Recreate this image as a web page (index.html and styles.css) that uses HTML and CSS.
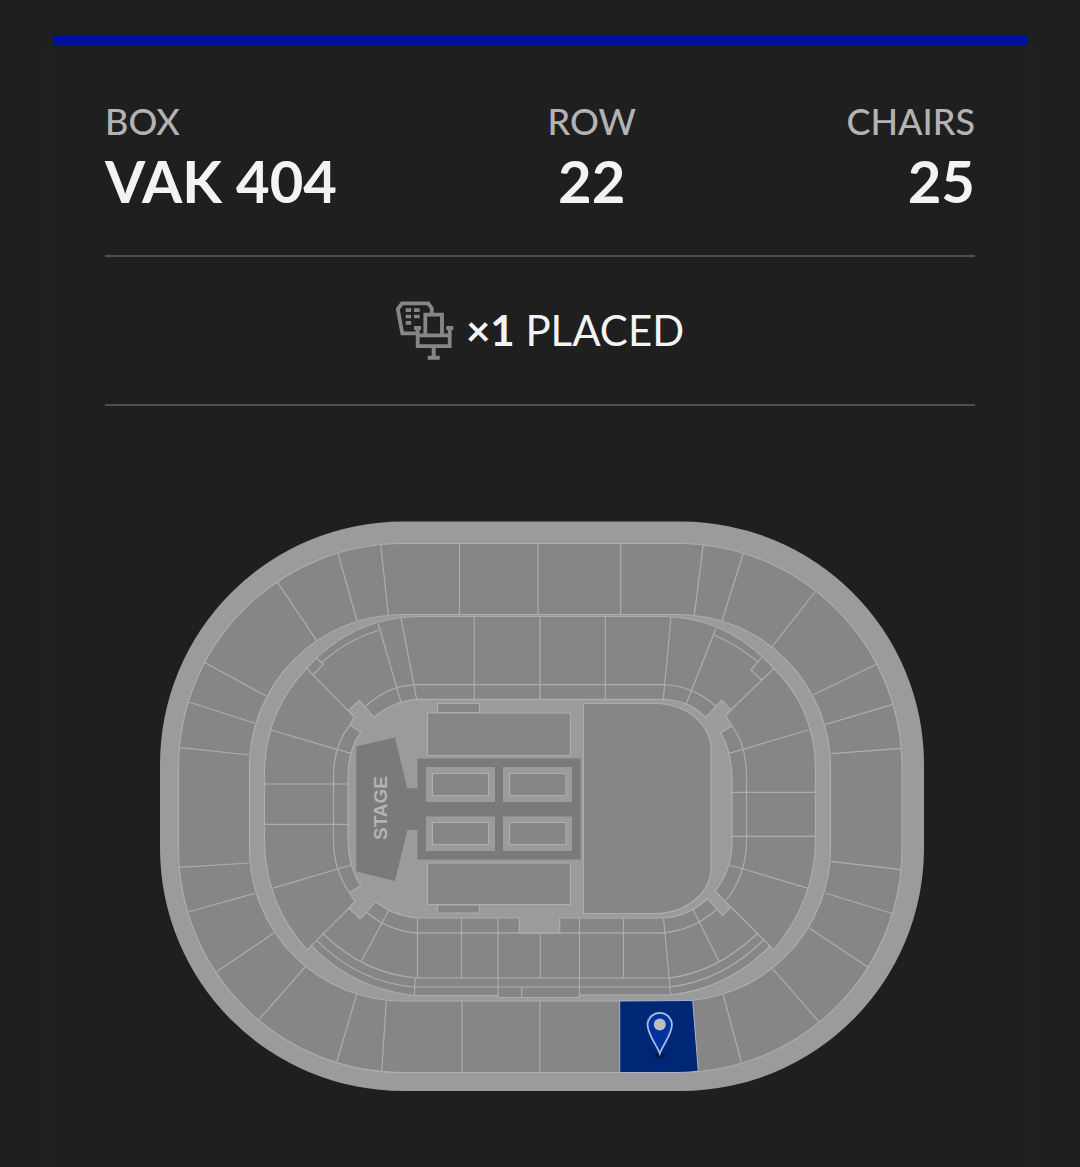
FILE: index.html
```html
<!DOCTYPE html>
<html lang="en">
<head>
    <meta charset="UTF-8">
    <meta name="viewport" content="width=device-width, initial-scale=1.0">
    <title>Your seat</title>
    <link rel="stylesheet" href="styles.css">
</head>
<body>
    <main class="ticket">
        <dl class="seat-info">
            <div class="seat-item">
                <dt>BOX</dt>
                <dd>VAK 404</dd>
            </div>
            <div class="seat-item center">
                <dt>ROW</dt>
                <dd>22</dd>
            </div>
            <div class="seat-item right">
                <dt>CHAIRS</dt>
                <dd>25</dd>
            </div>
        </dl>

        <div class="placed">
            <svg class="chair-icon" viewBox="0 0 58 59" aria-hidden="true">
                <path class="chair-line" d="M20 32.3H6.3L1.8 8 6 2.3H32.3L35.8 7.3V13M29.3 34V13.7H46V34M21.7 34.3H53.7V45.2H21.7ZM21.7 34V27M53.7 34V27"/>
                <path class="chair-fill" d="M18 25H25V29H18ZM50.3 25H57.3V29H50.3ZM35.7 46H39.7V55H35.7ZM31.7 54.7H43.7V58.7H31.7ZM9.7 7.3H15.2V11H9.7ZM18 7.3H23.7V11H18ZM9.7 13.7H15.2V17.3H9.7ZM18 13.7H23.7V17.3H18ZM9.7 20H15.2V23.7H9.7Z"/>
            </svg>
            <p><strong>×1</strong> PLACED</p>
        </div>

        <svg class="arena" viewBox="105 521 870 570" role="img" aria-label="Arena map">
            <!-- building -->
            <path class="base" d="M403 521.5H681A243 243 0 0 1 924 764.5V848A243 243 0 0 1 681 1091H403A243 243 0 0 1 160 848V764.5A243 243 0 0 1 403 521.5Z"/>

            <!-- upper ring -->
            <path class="seats" fill-rule="evenodd" d="M403 543.5H678A224 224 0 0 1 902 767.5V848.5A224 224 0 0 1 678 1072.5H403A224 224 0 0 1 178.5 848.5V767.5A224 224 0 0 1 403 543.5ZM402.5 614.5A153 153 0 0 0 249.5 767.5V848A153 153 0 0 0 402.5 1001H677.5A153 153 0 0 0 830.5 848V767.5A153 153 0 0 0 677.5 614.5Z"/>
            <path class="line" d="M380.7 544.3L388.3 614.7M338 553.3L357 621M277.7 582.3L316.7 640.7M204.3 662.3L266 696M188 701.7L255 723.3M178.7 747.3L249.7 755M459.5 543.5V614.5M538 543.5V614.5M620.7 543.5V614.5M703.3 544.3L694.3 615.3M743.3 553.3L722 620.7M815.7 591L772 646.7M877 664L813.3 694.7M893 704.3L825.7 724.3M901.7 748.3L830.7 753.7"/>
            <path class="line" d="M179.3 867.3L249.3 863M188 912L255 893.3M216.7 971.7L274.3 932.7M259.3 1019.3L305 967M336.7 1062L356.7 994.3M381.7 1071L386.3 1000.3M462 1001V1072.5M539.8 1001V1072.5M901 869.7L830.7 861.3M893 913.7L825.7 893.3M867.7 967L809 928M818.7 1021.3L772.3 968.3M741.3 1062L723.3 995"/>

            <!-- lower ring -->
            <path class="seats" fill-rule="evenodd" d="M415.5 616.5H664.5Q728 618 773.7 668.3Q815.5 709 815.5 770V843Q814 902 773.7 950L770 946Q729 988 670.7 995H579.5V997.5H498V995.5H414.3Q353 989 311.3 945.7L307.3 950Q266 905 264.5 843V770Q266 711 306.7 668.3Q350 619 415.5 616.5ZM417 699.3Q393 701 374 717.3L359.3 700.3L349 710L354 716.7L350 725L360.7 732.3Q348 750 348 777V842Q349 868 360.7 886L349.3 892.7L354.7 901.3L349 908L360 919L366.7 912.3L375.3 901.3Q393 916 417 918H519.3V933H559.7V918H663.5Q689 916 707.7 898.7L722.7 915.7L731 907.3L715 891Q732 870 732 842V777Q731 750 720.7 732.7L732 726L725.7 716L731 710L721.7 700.3L705.7 717.3Q689 700 663.3 699.3Z"/>
            <path class="line" d="M378.3 624L401 702.3M400.7 616.7L416.7 699.3M474.3 616.5V699.3M540 616.5V699.3M605.3 616.5V699.3M671 616.7L663.3 699.3M715.7 629L685.7 705M773.7 668.5L726.7 714M808.3 730L729.3 753.3M306.7 668.3L354 716.7M271 730L350.7 753.3M264.5 784H348M264.5 824.3H348M272.3 888.3L351 865M732 792.3H815.5M732 836.3H815.5M808.3 888.3L729.3 865"/>
            <path class="line" d="M322 662.3Q347 640 379.3 630M316.7 658L323.3 664.3L312.7 675M713.7 635Q738 645 757.7 661.7M761.7 657.7L751 670L761.3 680"/>
            <path class="line" d="M366 706Q389 685 417 684.7H663Q694 686 715.7 706.3M350 725Q333.5 745 333.5 777V842Q334 870 349.3 892.7M732 726Q746.5 745 746.5 777V842Q746 875 726.3 900M366.7 912.3Q388 931 417 932.8H664Q694 930 716.7 909.3"/>
            <path class="line" d="M323.3 933.7Q364 974 417.3 978H669Q717 972 757 933.7M316.7 940.3Q358 982 414.3 987H670Q722 981 763.3 940.3M311.3 945.7L349 908M770 946L731 907.3M389 910L361 961.7M692.7 909L719.3 961.7"/>
            <path class="line" d="M417.5 918V978M415.3 978L414.3 995M461.5 918V978M498 918V997.5M540.3 933V978M579.5 918V997.5M623.5 918V978M663.5 918L670.7 995M521.7 987V997.5"/>

            <!-- floor -->
            <path class="seats" d="M583.5 703.5H655A56 46 0 0 1 711 749.5V867.5A56 46 0 0 1 655 913.5H583.5Z"/>
            <path class="seats" d="M427.5 713H570.5V755.5H427.5ZM427.5 863H570.5V904.5H427.5ZM437.5 703.5H479.5V712.5H437.5ZM437.5 905H479.5V913H437.5Z"/>
            <path class="stage" d="M356.3 746.5L395 737.5L407.3 788.3H417.5V758.5H580.7V859.5H417.5V830H407.3L395 881L356.3 871.5Z"/>
            <path class="base" d="M426 767H495V802H426ZM503 767H572V802H503ZM426 816.5H495V851H426ZM503 816.5H572V851H503Z"/>
            <path class="seats" d="M432.5 773.5H488.5V795.5H432.5ZM509.5 773.5H566V795.5H509.5ZM432.5 822.5H488.5V844.5H432.5ZM509.5 822.5H566V844.5H509.5Z"/>
            <text class="stage-label" transform="translate(387 808) rotate(-90)">STAGE</text>

            <!-- selected box -->
            <path class="selected" d="M619.7 1001L692.7 1000.5L698.3 1071Q689 1072.5 678 1072.5H619.7Z"/>
            <ellipse class="pin-shadow" cx="660" cy="1055.500" rx="6" ry="3"/>
            <path class="pin" d="M659.8 1053.5C657 1045 647.5 1035 647.5 1024A12.3 12.3 0 0 1 672 1024C672 1035 662.5 1045 659.8 1053.5Z"/>
            <circle class="pin-dot" cx="659.8" cy="1024.5" r="6"/>
        </svg>
    </main>
</body>
</html>
```

FILE: styles.css
```css
* {
    box-sizing: border-box;
}
body {
    margin: 0;
    padding: 35px 52px 0 53px;
    background-color: #1f1f1f;
    color: #f3f3f3;
    font-family: Lato, sans-serif;
}
.ticket {
    padding: 53px 53px 76px 52px;
    border-top: 11px solid #000f9f;
    box-shadow: -8px 11px 0 #212121, 8px 11px 0 #212121;
    background-color: #1f1f1f;
}

/* Seat info */
.seat-info {
    display: flex;
    justify-content: space-between;
    margin: 0;
    padding-bottom: 36px;
    border-bottom: 2px solid #505050;
}
.seat-item dt {
    color: #b3b3b3;
    font-size: 36px;
    line-height: 44px;
    font-weight: 500;
}
.seat-item dd {
    margin: 0;
    font-size: 58px;
    line-height: 76px;
    font-weight: bold;
}
.center {
    text-align: center;
}
.right {
    text-align: right;
}

.placed {
    display: flex;
    justify-content: center;
    align-items: center;
    gap: 12px;
    padding: 44px 0;
    border-bottom: 2px solid #505050;
}
.placed p {
    margin: 0;
    font-size: 42px;
    line-height: 59px;
}
.chair-icon {
    width: 58px;
    height: 59px;
}
.chair-line {
    fill: none;
    stroke: #868686;
    stroke-width: 3.8;
}
.chair-fill {
    fill: #868686;
}

/* Arena map */
.arena {
    display: block;
    width: 100%;
    margin-top: 115px;
}
.base {
    fill: #9b9b9b;
}
.seats {
    fill: #868686;
    stroke: #adadad;
    stroke-width: 1.2;
}
.line {
    fill: none;
    stroke: #adadad;
    stroke-width: 1.2;
}
.stage {
    fill: #7a7a7a;
}
.stage-label {
    fill: #b3b3b3;
    font-family: "Liberation Sans", Arial, sans-serif;
    font-size: 19px;
    font-weight: bold;
    text-anchor: middle;
}
.selected {
    fill: #002776;
    stroke: #a9b4cc;
    stroke-width: 1;
}
.pin-shadow {
    fill: #001a50;
}
.pin {
    fill: #0033a0;
    stroke: #a9b8dd;
    stroke-width: 1.8;
}
.pin-dot {
    fill: #bdbdbd;
}
```
